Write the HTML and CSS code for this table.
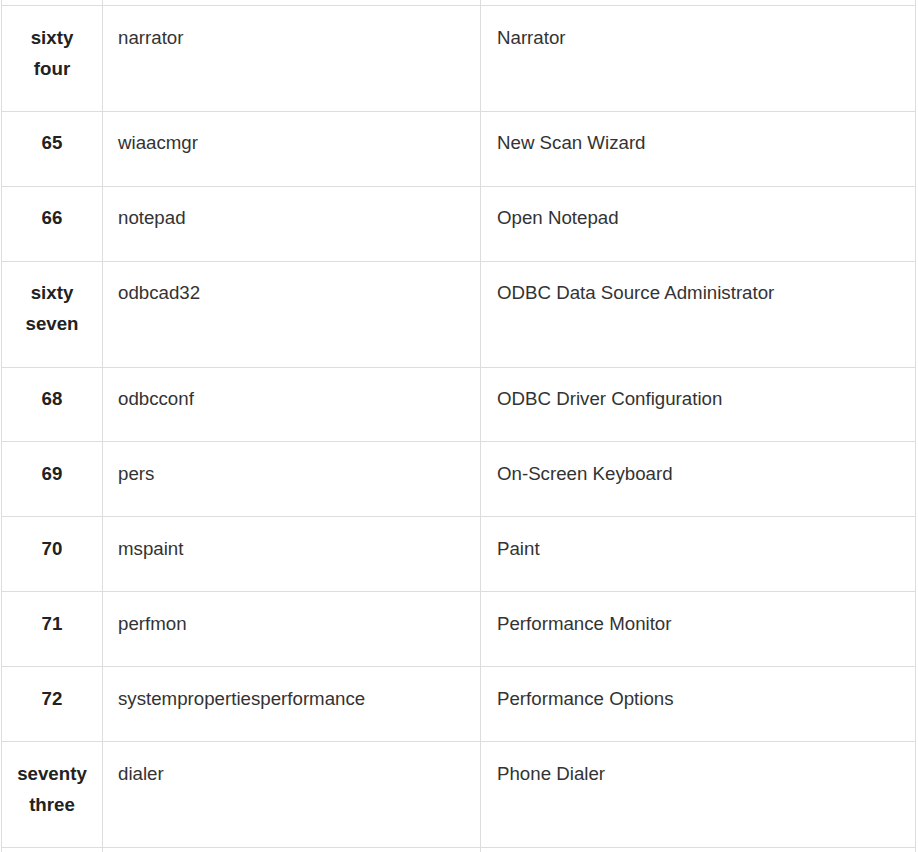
FILE: index.html
```html
<!DOCTYPE html>
<html lang="en">
<head>
<meta charset="utf-8">
<title>Run commands</title>
<link rel="stylesheet" href="styles.css">
</head>
<body>
<table class="cmd-table">
  <colgroup>
    <col class="c-num">
    <col class="c-cmd">
    <col class="c-desc">
  </colgroup>
  <tbody>
    <tr class="partial-top"><td></td><td></td><td></td></tr>
    <tr><th>sixty four</th><td>narrator</td><td class="desc">Narrator</td></tr>
    <tr><th>65</th><td>wiaacmgr</td><td class="desc">New Scan Wizard</td></tr>
    <tr><th>66</th><td>notepad</td><td class="desc">Open Notepad</td></tr>
    <tr><th>sixty seven</th><td>odbcad32</td><td class="desc">ODBC Data Source Administrator</td></tr>
    <tr><th>68</th><td>odbcconf</td><td class="desc">ODBC Driver Configuration</td></tr>
    <tr><th>69</th><td>pers</td><td class="desc">On-Screen Keyboard</td></tr>
    <tr><th>70</th><td>mspaint</td><td class="desc">Paint</td></tr>
    <tr><th>71</th><td>perfmon</td><td class="desc">Performance Monitor</td></tr>
    <tr><th>72</th><td>systempropertiesperformance</td><td class="desc">Performance Options</td></tr>
    <tr><th>seventy three</th><td>dialer</td><td class="desc">Phone Dialer</td></tr>
    <tr class="partial-bottom"><th></th><td></td><td></td></tr>
  </tbody>
</table>
</body>
</html>
```
FILE: styles.css
```css
html, body {
  margin: 0;
  padding: 0;
  background: #fff;
}

body {
  padding-left: 1px;
  font-family: "Liberation Sans", Arial, sans-serif;
  font-size: 18.7px;
  line-height: 31px;
  color: #333;
}

.cmd-table {
  border-collapse: collapse;
  table-layout: fixed;
  width: 914px;
}

.c-num { width: 101px; }
.c-cmd { width: 378px; }
.c-desc { width: 435px; }

.cmd-table th,
.cmd-table td {
  border: 1px solid #ddd;
  padding: 15.5px 15px 27.4px 15px;
  vertical-align: top;
  text-align: left;
  font-weight: normal;
}

.cmd-table td.desc {
  padding-left: 16px;
}

.cmd-table th {
  text-align: center;
  font-weight: bold;
  color: #222;
  padding-left: 8px;
  padding-right: 8px;
}

.cmd-table .partial-top td {
  height: 5px;
  padding: 0;
  border-top: none;
}

.cmd-table .partial-bottom th,
.cmd-table .partial-bottom td {
  height: 40px;
}
```
